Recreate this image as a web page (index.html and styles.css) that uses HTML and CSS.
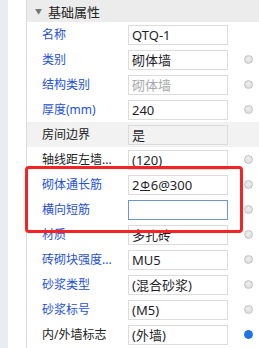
FILE: index.html
```html
<!DOCTYPE html>
<html>
<head>
<meta charset="utf-8">
<link rel="stylesheet" href="styles.css">
</head>
<body>
<div class="page">
  <div class="rail"></div>
  <div class="spacer"></div>
  <div class="panel">
    <div class="header"><span class="caret">▼</span><span class="title">基础属性</span></div>
    <div class="row"><span class="label blue">名称</span><span class="box">QTQ-1</span><span class="dot none"></span></div>
    <div class="row"><span class="label blue">类别</span><span class="box">砌体墙</span><span class="dot"></span></div>
    <div class="row"><span class="label blue">结构类别</span><span class="box muted">砌体墙</span><span class="dot"></span></div>
    <div class="row"><span class="label blue">厚度(mm)</span><span class="box">240</span><span class="dot"></span></div>
    <div class="row shaded"><span class="label">房间边界</span><span class="box">是</span><span class="dot none"></span></div>
    <div class="row"><span class="label">轴线距左墙...</span><span class="box">(120)</span><span class="dot"></span></div>
    <div class="row"><span class="label blue">砌体通长筋</span><span class="box">2<span class="rebar">Φ</span>6@300</span><span class="dot"></span></div>
    <div class="row"><span class="label blue">横向短筋</span><span class="box focus"></span><span class="dot"></span></div>
    <div class="row"><span class="label blue">材质</span><span class="box">多孔砖</span><span class="dot"></span></div>
    <div class="row"><span class="label blue">砖砌块强度...</span><span class="box">MU5</span><span class="dot"></span></div>
    <div class="row"><span class="label blue">砂浆类型</span><span class="box">(混合砂浆)</span><span class="dot"></span></div>
    <div class="row"><span class="label blue">砂浆标号</span><span class="box">(M5)</span><span class="dot"></span></div>
    <div class="row"><span class="label">内/外墙标志</span><span class="box">(外墙)</span><span class="dot on"></span></div>
  </div>
  <div class="highlight"></div>
</div>
</body>
</html>
```

FILE: styles.css
```css
html, body {
  margin: 0;
  padding: 0;
  background: #ffffff;
}
body {
  font-family: "Noto Sans", "Noto Sans CJK SC", sans-serif;
  font-size: 12px;
  color: #222;
  overflow: hidden;
}
.page {
  position: relative;
  display: flex;
  width: 259px;
  height: 348px;
}
.rail {
  width: 8px;
  background: #e9edf3;
}
.spacer {
  width: 18px;
  background: #ffffff;
}
.panel {
  flex: 1;
  border-left: 1px solid #dcdcdc;
  display: flex;
  flex-direction: column;
}
.header {
  height: 22px;
  background: #ececec;
  display: flex;
  align-items: center;
}
.caret {
  font-size: 7px;
  color: #777;
  margin-left: 8px;
  width: 13px;
}
.title {
  font-size: 13px;
  color: #222;
}
.row {
  height: 25px;
  display: grid;
  grid-template-columns: 101px 100px 1fr;
  align-items: start;
  padding-top: 3px;
  box-sizing: border-box;
}
.row.shaded {
  background: #f2f2f2;
}
.label {
  padding-left: 15px;
  height: 20px;
  line-height: 20px;
  white-space: nowrap;
  color: #222;
}
.label.blue {
  color: #2350de;
}
.box {
  height: 20px;
  line-height: 18px;
  box-sizing: border-box;
  border: 1px solid #dcdcdc;
  padding-left: 3px;
  font-size: 13px;
  color: #1e1e2a;
  white-space: nowrap;
}
.box.muted {
  color: #a8a8a8;
}
.box.focus {
  border-color: #6a93d8;
}
.rebar {
  display: inline-block;
  font-size: 11px;
  line-height: 11px;
  border-bottom: 1px solid #1e1e2a;
  margin: 0 1px;
  vertical-align: 1px;
}
.dot {
  width: 9px;
  height: 9px;
  margin-left: 16px;
  margin-top: 5px;
  border-radius: 50%;
  box-sizing: border-box;
  border: 1px solid #c4c4c4;
  background: radial-gradient(circle at 50% 40%, #f0f0f0, #d6d6d6);
}
.dot.none {
  visibility: hidden;
}
.dot.on {
  border-color: #1b6fe6;
  background: #1f74ea;
}
.highlight {
  position: absolute;
  left: 25px;
  top: 166px;
  width: 218px;
  height: 67px;
  box-sizing: border-box;
  border: 3px solid #f52323;
  border-radius: 4px;
}
```
